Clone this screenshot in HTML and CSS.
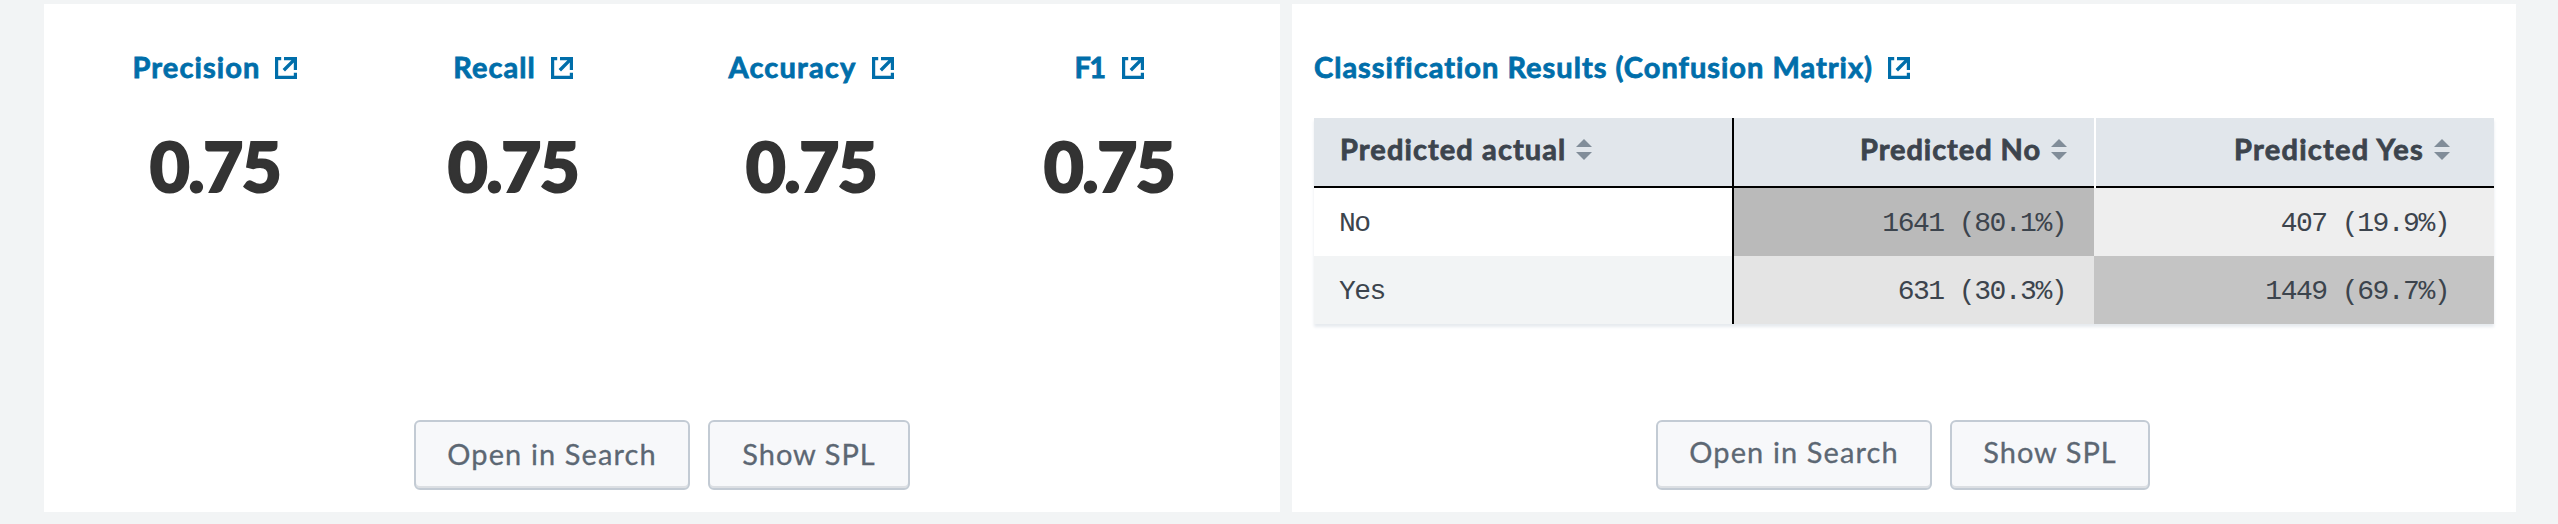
FILE: index.html
```html
<!DOCTYPE html>
<html lang="en">
<head>
<meta charset="utf-8">
<title>Classification Results</title>
<link rel="stylesheet" href="styles.css">
</head>
<body>
<svg class="sprite" aria-hidden="true">
  <symbol id="external" viewBox="0 0 22 22">
    <path d="M6.2 0H0v22h22v-6.2h-3.2v3H3.2V3.2h3z"/>
    <path d="M9 0h13v13h-3.2V5.6L10 14.4 7.6 12l8.8-8.8H9z"/>
  </symbol>
  <symbol id="sort" viewBox="0 0 16 21">
    <path d="M8 0l8 8H0z"/><path d="M0 13h16l-8 8z"/>
  </symbol>
</svg>
<main class="dashboard">
  <section class="panel panel-stats">
    <div class="stats">
      <div class="stat"><a class="link precision"><span>Precision</span><svg class="ext"><use href="#external"/></svg></a><div class="value">0.75</div></div>
      <div class="stat"><a class="link recall"><span>Recall</span><svg class="ext"><use href="#external"/></svg></a><div class="value">0.75</div></div>
      <div class="stat"><a class="link accuracy"><span>Accuracy</span><svg class="ext"><use href="#external"/></svg></a><div class="value">0.75</div></div>
      <div class="stat"><a class="link f1"><span>F1</span><svg class="ext"><use href="#external"/></svg></a><div class="value">0.75</div></div>
    </div>
    <div class="actions">
      <button class="btn btn-open">Open in Search</button>
      <button class="btn btn-spl">Show SPL</button>
    </div>
  </section>
  <section class="panel panel-matrix">
    <a class="link title"><span>Classification Results (Confusion Matrix)</span><svg class="ext"><use href="#external"/></svg></a>
    <div class="matrix">
      <div class="th first"><span class="actual">Predicted actual</span><svg class="sort"><use href="#sort"/></svg></div>
      <div class="th num"><span class="pno">Predicted No</span><svg class="sort"><use href="#sort"/></svg></div>
      <div class="th num last"><span class="pyes">Predicted Yes</span><svg class="sort"><use href="#sort"/></svg></div>
      <div class="td first">No</div>
      <div class="td num tn">1641 (80.1%)</div>
      <div class="td num last fp">407 (19.9%)</div>
      <div class="td first alt">Yes</div>
      <div class="td num fn">631 (30.3%)</div>
      <div class="td num last tp">1449 (69.7%)</div>
    </div>
    <div class="actions">
      <button class="btn btn-open">Open in Search</button>
      <button class="btn btn-spl">Show SPL</button>
    </div>
  </section>
</main>
</body>
</html>
```
FILE: styles.css
```css
* { box-sizing: border-box; }
body { margin: 0; background: #f2f4f5; font-family: Lato, sans-serif; color: #3c444d; }
.sprite { display: none; }
.dashboard { display: flex; gap: 12px; height: 524px; padding: 4px 42px 12px 44px; }
.panel { display: flex; flex-direction: column; background: #fff; height: 508px; }
.panel-stats { width: 1236px; padding: 45px 22px 0; }
.panel-matrix { width: 1224px; padding: 45px 22px 0; }
.stats { display: grid; grid-template-columns: repeat(4, 298px); height: 371px; }
.stat { display: flex; flex-direction: column; align-items: center; }
.link { display: flex; align-items: flex-start; gap: 15px; height: 36px; line-height: 36px; font-size: 29px; font-weight: 700; letter-spacing: 1px; color: #006eaa; white-space: nowrap; -webkit-text-stroke: 0.8px currentColor; }
.link.precision { letter-spacing: 1.1px; }
.link.accuracy { letter-spacing: 1.2px; }
.link.f1 { letter-spacing: -1.6px; gap: 17px; }
.link.title { letter-spacing: 1px; }
.ext { width: 22px; height: 22px; margin-top: 8px; fill: currentColor; }
.value { margin-top: 39px; height: 84px; line-height: 84px; font-size: 69px; font-weight: 900; letter-spacing: -1.5px; color: #333; -webkit-text-stroke: 2px currentColor; }
.matrix { display: grid; grid-template-columns: 420px 360px 400px; grid-template-rows: 70px 68px 68px; width: 1180px; margin-top: 33px; box-shadow: 0 3px 3px #e6eaef; }
.th { display: flex; align-items: flex-start; gap: 10px; padding: 13px 27px 0 0; line-height: 36px; font-size: 29px; font-weight: 700; letter-spacing: 1.1px; background: #e1e6eb; border-bottom: 2px solid #000; white-space: nowrap; -webkit-text-stroke: 0.8px currentColor; }
.pno { letter-spacing: 0.95px; }
.pyes { letter-spacing: 1.25px; }
.th.last { margin-left: 2px; box-shadow: -2px 0 #fff; }
.num { justify-content: flex-end; }
.sort { width: 16px; height: 21px; margin-top: 8px; fill: #818d99; stroke: none; }
.first { padding-left: 26px; border-right: 2px solid #000; }
.td { display: flex; padding: 2px 28px 0 0; line-height: 68px; font-family: "Liberation Mono", monospace; font-size: 28px; letter-spacing: -1.5px; white-space: pre; background: #fff; }
.td.first { padding-left: 25px; }
.th.last { padding-right: 44px; }
.td.last { padding-right: 45px; }
.td.alt { background: #f2f4f5; }
.td.tn { background: #bababa; }
.td.fp { background: #eee; }
.td.fn { background: #e4e4e4; }
.td.tp { background: #c4c4c4; }
.actions { display: flex; gap: 18px; }
.panel-stats .actions { padding-left: 348px; }
.panel-matrix .actions { margin-top: 96px; padding-left: 342px; }
.btn { height: 70px; padding: 0 0 3px; font: 400 29px/36px Lato, sans-serif; letter-spacing: 1.1px; color: #5c6773; background: #f7f8fa; border: 2px solid #c3cbd4; border-radius: 6px; box-shadow: inset 0 -2px #dcdfe3; white-space: nowrap; -webkit-text-stroke: 0.3px currentColor; }
.btn-open { width: 276px; }
.btn-spl { width: 202px; letter-spacing: 1px; }
.panel-matrix .btn { padding-bottom: 7px; }
.panel-matrix .btn-spl { width: 200px; }
```
